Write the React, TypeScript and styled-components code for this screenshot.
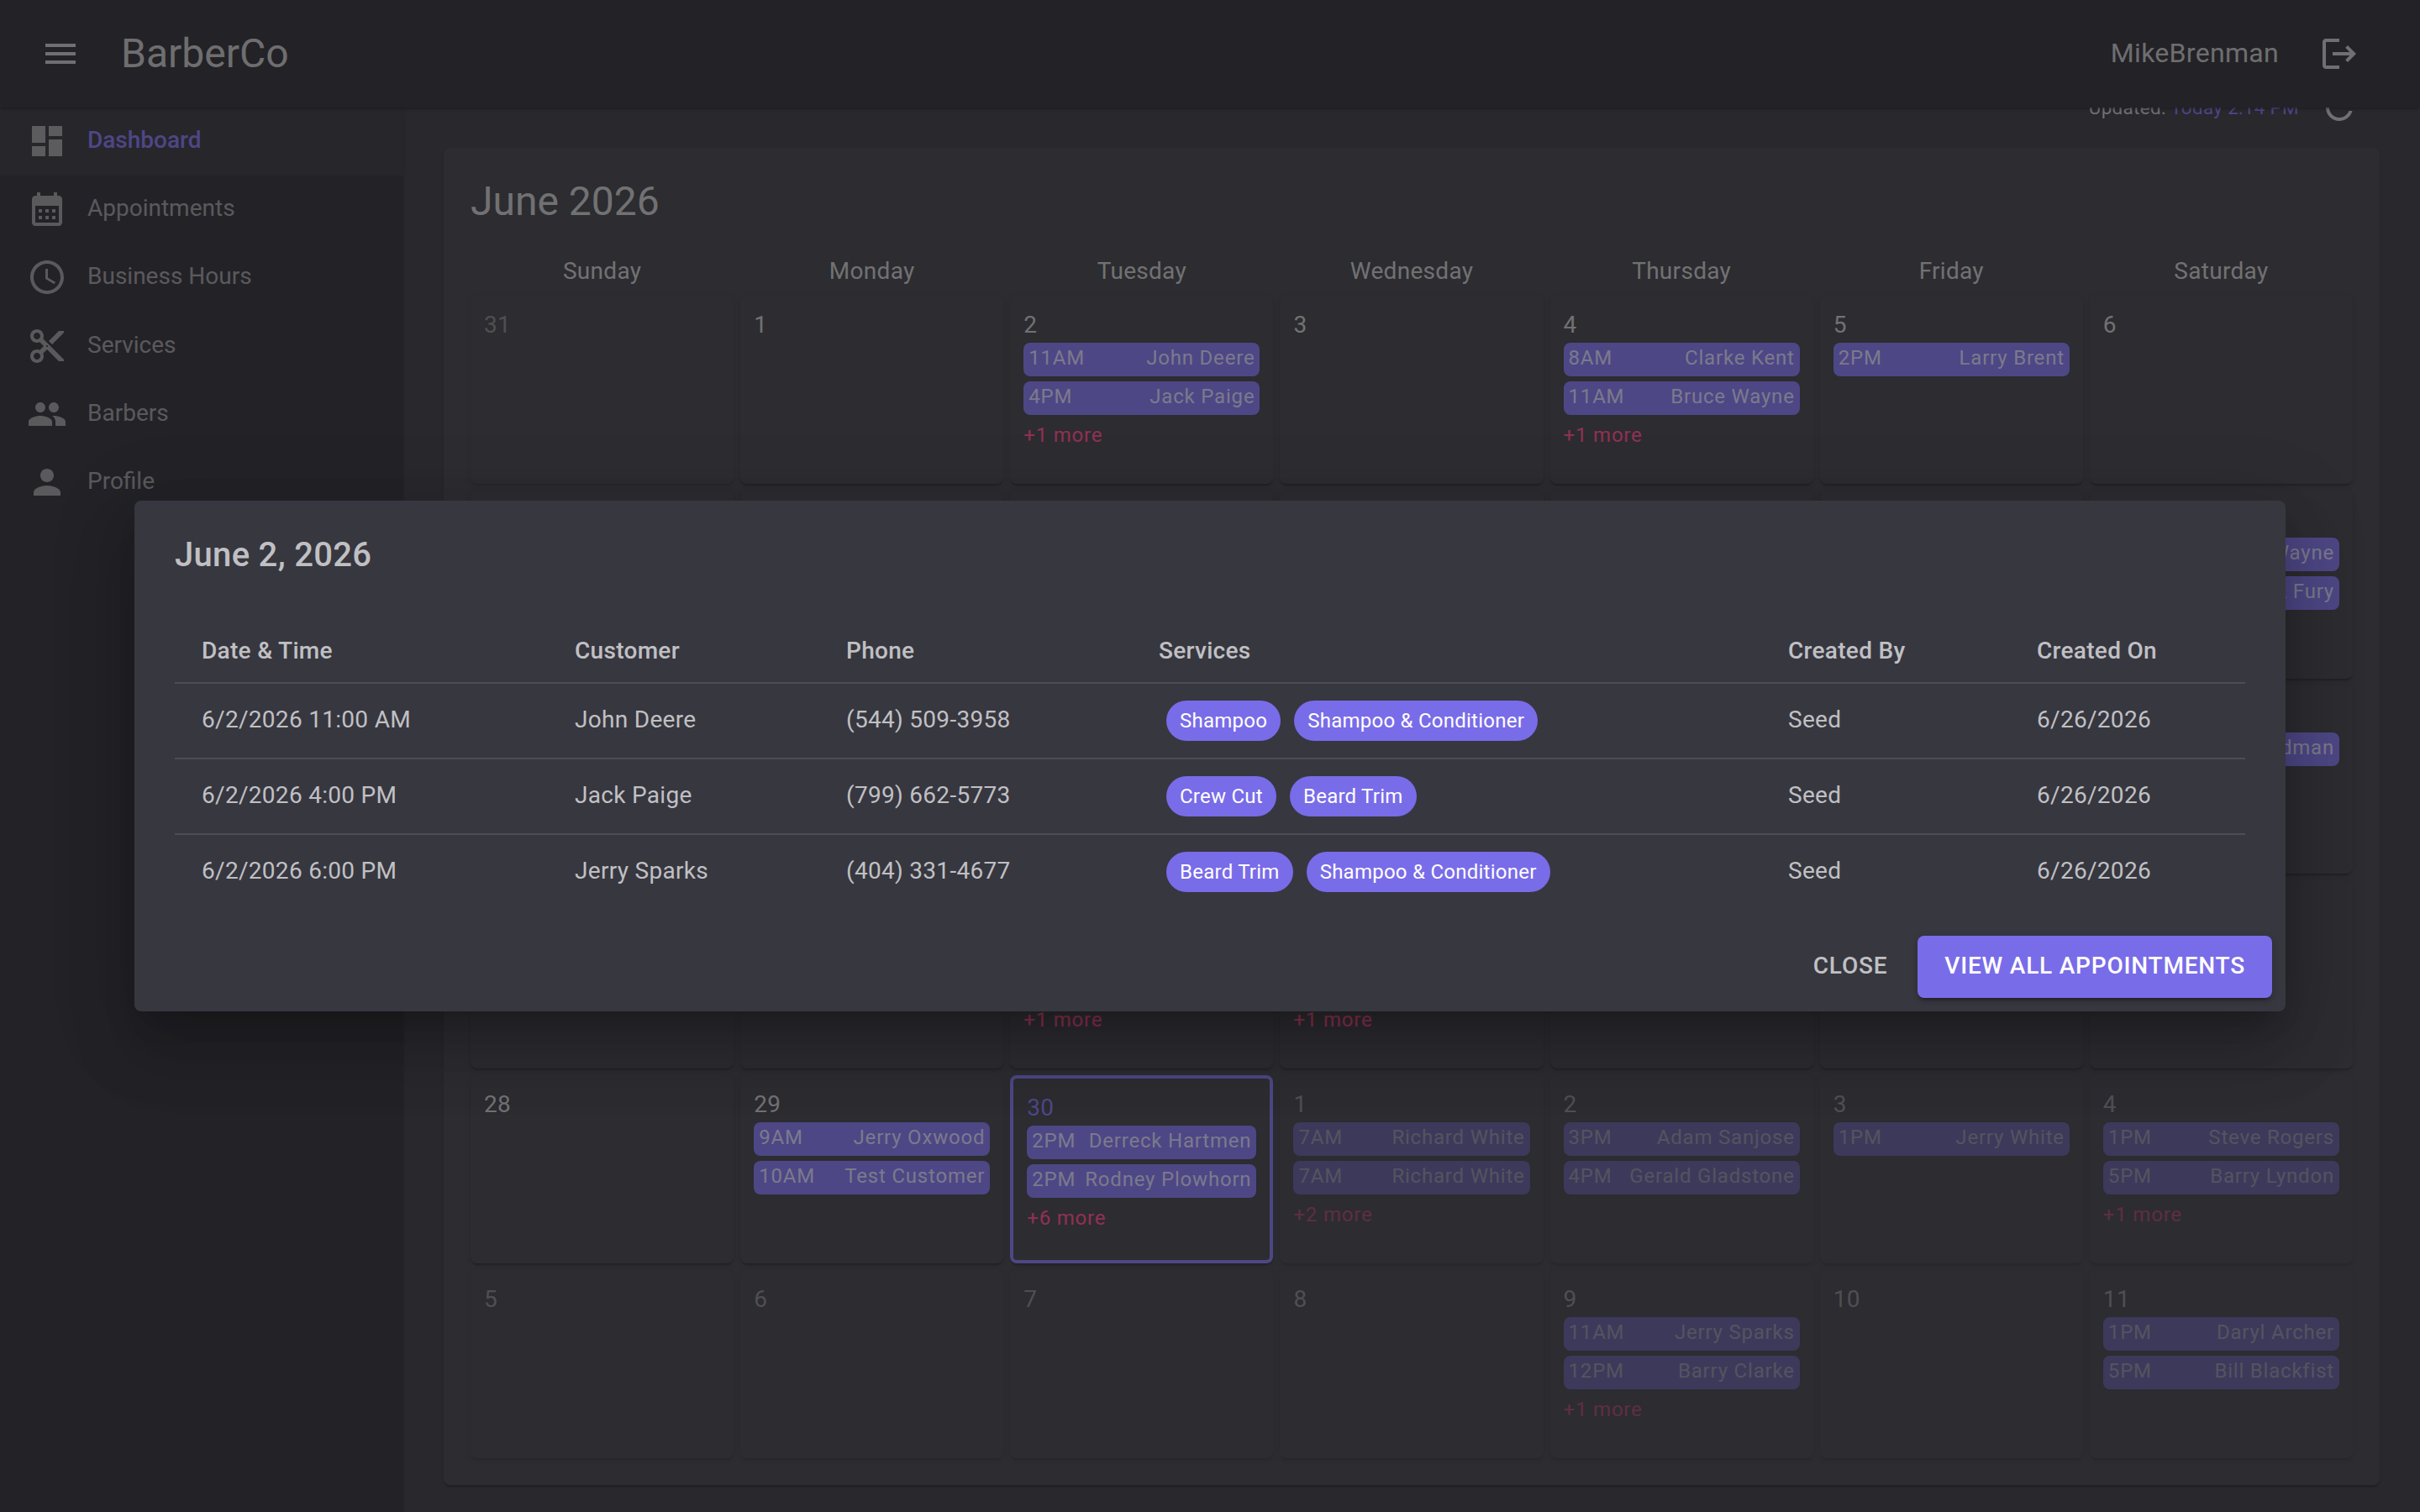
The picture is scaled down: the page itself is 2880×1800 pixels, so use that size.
import React from "react";
import styled, { createGlobalStyle, css } from "styled-components";

const color = {
  bar: "#25232d",
  page: "#2f2f39",
  paper: "#373740",
  primary: "#796ce8",
  secondary: "#ff4081",
  text: "rgba(255, 255, 255, 0.7)",
  muted: "rgba(255, 255, 255, 0.5)",
  divider: "#4d4d56",
};

const elevation =
  "0 4px 2px -2px rgba(0, 0, 0, 0.2), 0 2px 2px rgba(0, 0, 0, 0.14), 0 2px 6px rgba(0, 0, 0, 0.12)";

const GlobalStyle = createGlobalStyle`
  *, *::before, *::after { box-sizing: border-box; }
  html, body { margin: 0; height: 1800px; overflow: hidden; }
  body {
    background: ${color.page};
    color: ${color.text};
    font-family: Roboto, "Liberation Sans", sans-serif;
    font-size: 28px;
    line-height: 40px;
    letter-spacing: 0.3px;
  }
`;

const Shell = styled.div`
  position: relative;
  width: 2880px;
  height: 1800px;
  overflow: hidden;
  display: grid;
  grid-template: 128px 1fr / 480px 1fr;
`;

const AppBar = styled.header`
  grid-column: 1 / -1;
  position: relative;
  z-index: 2;
  display: flex;
  align-items: center;
  padding: 0 48px;
  background: ${color.bar};
  box-shadow: ${elevation};
`;

const IconSvg = styled.svg`
  display: block;
  width: 48px;
  height: 48px;
  fill: currentColor;
  flex: none;
`;

const Brand = styled.h1`
  margin: 0 auto 0 48px;
  font-size: 48px;
  font-weight: 400;
  line-height: 64px;
  letter-spacing: 0;
`;

const UserName = styled.span`
  margin-right: 48px;
  padding-bottom: 2px;
  font-size: 32px;
  line-height: 46px;
`;

const LogoutSlot = styled.span`
  margin-right: 24px;
`;

const Sidebar = styled.nav`
  position: relative;
  z-index: 1;
  display: flex;
  flex-direction: column;
  background: ${color.bar};
  box-shadow: ${elevation};
`;

const NavItem = styled.a<{ $active?: boolean }>`
  display: flex;
  align-items: center;
  height: 81.2px;
  padding: 0 32px 1px;
  gap: 24px;
  color: ${color.muted};
  letter-spacing: 0;
  ${(p) =>
    p.$active &&
    css`
      background: rgba(255, 255, 255, 0.04);
    `}
`;

const NavLabel = styled.span<{ $active?: boolean }>`
  padding-bottom: 3px;
  line-height: 37px;
  ${(p) =>
    p.$active &&
    css`
      color: ${color.primary};
      font-weight: 500;
    `}
`;

const Main = styled.main`
  display: flex;
  flex-direction: column;
  padding: 0 48px;
  margin-top: -48px;
`;

const StatusRow = styled.div`
  display: flex;
  align-items: center;
  justify-content: flex-end;
  height: 96px;
  padding-right: 24px;
  gap: 24px;
`;

const Updated = styled.span`
  font-size: 22.4px;
  letter-spacing: 0.35px;
  em { color: ${color.primary}; font-style: normal; }
`;

const Calendar = styled.section`
  display: flex;
  flex-direction: column;
  height: 1592px;
  padding: 32px;
  border-radius: 8px;
  background: ${color.paper};
  box-shadow: ${elevation};
`;

const MonthTitle = styled.h2`
  margin: 0 0 32px;
  font-size: 48px;
  font-weight: 400;
  line-height: 64px;
  letter-spacing: 0;
`;

const Grid = styled.div`
  display: grid;
  grid-template-columns: repeat(7, 1fr);
  grid-template-rows: 40px repeat(6, 224px);
  gap: 8px;
`;

const Weekday = styled.div`
  padding-bottom: 3px;
  line-height: 37px;
  text-align: center;
`;

const Cell = styled.div<{ $outside?: boolean; $today?: boolean }>`
  display: flex;
  flex-direction: column;
  min-width: 0;
  padding: 16px;
  border-radius: 8px;
  background: ${color.paper};
  box-shadow: ${elevation};
  ${(p) => p.$outside && "opacity: 0.5;"}
  ${(p) => p.$today && `border: 4px solid ${color.primary};`}
`;

const DayNumber = styled.span<{ $today?: boolean }>`
  padding-bottom: 3px;
  line-height: 37px;
  ${(p) => p.$today && `color: ${color.primary};`}
`;

const Event = styled.div`
  display: flex;
  justify-content: space-between;
  height: 40px;
  margin-bottom: 6px;
  padding: 0 6px 4px;
  border-radius: 8px;
  background: ${color.primary};
  font-size: 24px;
  line-height: 36px;
  letter-spacing: 0.8px;
  white-space: nowrap;
`;

const More = styled.span`
  color: ${color.secondary};
  font-size: 24px;
  line-height: 36px;
  letter-spacing: 0.8px;
`;

const Backdrop = styled.div`
  position: absolute;
  inset: 0;
  z-index: 10;
  display: flex;
  align-items: center;
  justify-content: center;
  background: rgba(33, 33, 33, 0.5);
`;

const Dialog = styled.div`
  width: 2560px;
  height: 608px;
  border-radius: 8px;
  background: ${color.paper};
  box-shadow: 0 22px 30px -14px rgba(0, 0, 0, 0.2), 0 48px 76px 6px rgba(0, 0, 0, 0.14), 0 18px 92px 16px rgba(0, 0, 0, 0.12);
`;

const DialogTitle = styled.h2`
  margin: 0;
  padding: 33px 48px 31px;
  font-size: 40px;
  font-weight: 500;
  line-height: 64px;
  letter-spacing: 0.3px;
`;

const DialogContent = styled.div`
  padding: 16px 48px;
`;

const Table = styled.table`
  width: 2464px;
  table-layout: fixed;
  border-collapse: separate;
  border-spacing: 0;
`;

const HeadCell = styled.th`
  height: 74px;
  padding: 0 0 2px 32px;
  border-bottom: 2px solid ${color.divider};
  font-weight: 500;
  text-align: left;
`;

const BodyCell = styled.td<{ $last?: boolean; $chips?: boolean }>`
  height: ${(p) => (p.$last ? 88 : 90)}px;
  padding: ${(p) => (p.$chips ? "0 0 0 41px" : "0 0 3px 32px")};
  border-bottom: ${(p) => (p.$last ? "none" : `2px solid ${color.divider}`)};
`;

const Chips = styled.div`
  display: flex;
  gap: 16px;
`;

const Chip = styled.span`
  height: 48px;
  padding: 0 16px;
  border-radius: 24px;
  background: ${color.primary};
  color: #fff;
  font-size: 24px;
  line-height: 48px;
  letter-spacing: 0.25px;
  white-space: nowrap;
`;

const DialogActions = styled.div`
  display: flex;
  justify-content: flex-end;
  gap: 20px;
  padding: 16px;
`;

const Button = styled.button<{ $contained?: boolean }>`
  height: 74px;
  padding: 0 16px 4px;
  border: 0;
  border-radius: 8px;
  background: transparent;
  color: ${color.text};
  font: 500 28px/49px Roboto, "Liberation Sans", sans-serif;
  letter-spacing: 0.8px;
  text-transform: uppercase;
  ${(p) =>
    p.$contained &&
    css`
      padding: 0 32px 4px;
      background: ${color.primary};
      color: #fff;
      box-shadow: 0 6px 2px -4px rgba(0, 0, 0, 0.2), 0 4px 4px rgba(0, 0, 0, 0.14), 0 2px 10px rgba(0, 0, 0, 0.12);
    `}
`;

const Icon = ({ d }: { d: string }) => (
  <IconSvg viewBox="0 0 24 24">
    <path d={d} />
  </IconSvg>
);

const icons = {
  menu: "M3 18h18v-2H3v2zm0-5h18v-2H3v2zm0-7v2h18V6H3z",
  logout:
    "M17 7l-1.41 1.41L18.17 11H8v2h10.17l-2.58 2.58L17 17l5-5zM4 5h8V3H4c-1.1 0-2 .9-2 2v14c0 1.1.9 2 2 2h8v-2H4V5z",
  refresh:
    "M17.65 6.35C16.2 4.9 14.21 4 12 4c-4.42 0-7.99 3.58-7.99 8s3.57 8 7.99 8c3.73 0 6.84-2.55 7.73-6h-2.08c-.82 2.33-3.04 4-5.65 4-3.31 0-6-2.69-6-6s2.69-6 6-6c1.66 0 3.14.69 4.22 1.78L13 11h7V4l-2.35 2.35z",
  dashboard: "M3 13h8V3H3v10zm0 8h8v-6H3v6zm10 0h8V11h-8v10zm0-18v6h8V3h-8z",
  calendar:
    "M19 4h-1V2h-2v2H8V2H6v2H5c-1.11 0-1.99.9-1.99 2L3 20c0 1.1.89 2 2 2h14c1.1 0 2-.9 2-2V6c0-1.1-.9-2-2-2zm0 16H5V10h14v10zM9 14H7v-2h2v2zm4 0h-2v-2h2v2zm4 0h-2v-2h2v2zm-8 4H7v-2h2v2zm4 0h-2v-2h2v2zm4 0h-2v-2h2v2z",
  clock:
    "M11.99 2C6.47 2 2 6.48 2 12s4.47 10 9.99 10C17.52 22 22 17.52 22 12S17.52 2 11.99 2zM12 20c-4.42 0-8-3.58-8-8s3.58-8 8-8 8 3.58 8 8-3.58 8-8 8zm.5-13H11v6l5.25 3.15.75-1.23-4.5-2.67z",
  cut: "M9.64 7.64c.23-.5.36-1.05.36-1.64 0-2.21-1.79-4-4-4S2 3.79 2 6s1.79 4 4 4c.59 0 1.14-.13 1.64-.36L10 12l-2.36 2.36C7.14 14.13 6.59 14 6 14c-2.21 0-4 1.79-4 4s1.79 4 4 4 4-1.79 4-4c0-.59-.13-1.14-.36-1.64L12 14l7 7h3v-1L9.64 7.64zM6 8c-1.1 0-2-.89-2-2s.9-2 2-2 2 .89 2 2-.9 2-2 2zm0 12c-1.1 0-2-.89-2-2s.9-2 2-2 2 .89 2 2-.9 2-2 2zm6-7.5c-.28 0-.5-.22-.5-.5s.22-.5.5-.5.5.22.5.5-.22.5-.5.5zM19 3l-6 6 2 2 7-7V3z",
  group:
    "M16 11c1.66 0 2.99-1.34 2.99-3S17.66 5 16 5c-1.66 0-3 1.34-3 3s1.34 3 3 3zm-8 0c1.66 0 2.99-1.34 2.99-3S9.66 5 8 5C6.34 5 5 6.34 5 8s1.34 3 3 3zm0 2c-2.33 0-7 1.17-7 3.5V19h14v-2.5c0-2.33-4.67-3.5-7-3.5zm8 0c-.29 0-.62.02-.97.05 1.16.84 1.97 1.97 1.97 3.45V19h6v-2.5c0-2.33-4.67-3.5-7-3.5z",
  person:
    "M12 12c2.21 0 4-1.79 4-4s-1.79-4-4-4-4 1.79-4 4 1.79 4 4 4zm0 2c-2.67 0-8 1.34-8 4v2h16v-2c0-2.66-5.33-4-8-4z",
};

const nav = [
  { label: "Dashboard", icon: icons.dashboard, active: true },
  { label: "Appointments", icon: icons.calendar },
  { label: "Business Hours", icon: icons.clock },
  { label: "Services", icon: icons.cut },
  { label: "Barbers", icon: icons.group },
  { label: "Profile", icon: icons.person },
];

const weekdays = ["Sunday", "Monday", "Tuesday", "Wednesday", "Thursday", "Friday", "Saturday"];

type Booking = [time: string, customer: string];
const bookings: Record<number, { list: Booking[]; more?: number }> = {
  2: { list: [["11AM", "John Deere"], ["4PM", "Jack Paige"]], more: 1 },
  4: { list: [["8AM", "Clarke Kent"], ["11AM", "Bruce Wayne"]], more: 1 },
  5: { list: [["2PM", "Larry Brent"]] },
  13: { list: [["9AM", "Bruce Wayne"], ["1PM", "Nick Fury"]] },
  20: { list: [["3PM", "Gary Oldman"]] },
  23: { list: [["9AM", "Jack Paige"], ["1PM", "John Deere"]], more: 1 },
  24: { list: [["9AM", "Jerry White"], ["3PM", "Larry Brent"]], more: 1 },
  29: { list: [["9AM", "Jerry Oxwood"], ["10AM", "Test Customer"]] },
  30: { list: [["2PM", "Derreck Hartmen"], ["2PM", "Rodney Plowhorn"]], more: 6 },
  31: { list: [["7AM", "Richard White"], ["7AM", "Richard White"]], more: 2 },
  32: { list: [["3PM", "Adam Sanjose"], ["4PM", "Gerald Gladstone"]] },
  33: { list: [["1PM", "Jerry White"]] },
  34: { list: [["1PM", "Steve Rogers"], ["5PM", "Barry Lyndon"]], more: 1 },
  39: { list: [["11AM", "Jerry Sparks"], ["12PM", "Barry Clarke"]], more: 1 },
  41: { list: [["1PM", "Daryl Archer"], ["5PM", "Bill Blackfist"]] },
};

const days = Array.from({ length: 42 }, (_, index) => ({
  index,
  label: index === 0 ? 31 : index > 30 ? index - 30 : index,
  outside: index === 0 || index > 30,
  today: index === 30,
}));

const columns: [string, number][] = [
  ["Date & Time", 444],
  ["Customer", 323],
  ["Phone", 372],
  ["Services", 749],
  ["Created By", 296],
  ["Created On", 280],
];

const appointments = [
  { when: "6/2/2026 11:00 AM", who: "John Deere", phone: "(544) 509-3958", services: ["Shampoo", "Shampoo & Conditioner"] },
  { when: "6/2/2026 4:00 PM", who: "Jack Paige", phone: "(799) 662-5773", services: ["Crew Cut", "Beard Trim"] },
  { when: "6/2/2026 6:00 PM", who: "Jerry Sparks", phone: "(404) 331-4677", services: ["Beard Trim", "Shampoo & Conditioner"] },
];

export default function App() {
  return (
    <>
      <GlobalStyle />
      <Shell>
        <AppBar>
          <Icon d={icons.menu} />
          <Brand>BarberCo</Brand>
          <UserName>MikeBrenman</UserName>
          <LogoutSlot>
            <Icon d={icons.logout} />
          </LogoutSlot>
        </AppBar>
        <Sidebar>
          {nav.map((item) => (
            <NavItem key={item.label} $active={item.active}>
              <Icon d={item.icon} />
              <NavLabel $active={item.active}>{item.label}</NavLabel>
            </NavItem>
          ))}
        </Sidebar>
        <Main>
          <StatusRow>
            <Updated>
              Updated: <em>Today 2:14 PM</em>
            </Updated>
            <Icon d={icons.refresh} />
          </StatusRow>
          <Calendar>
            <MonthTitle>June 2026</MonthTitle>
            <Grid>
              {weekdays.map((name) => (
                <Weekday key={name}>{name}</Weekday>
              ))}
              {days.map((day) => {
                const entry = bookings[day.index];
                return (
                  <Cell key={day.index} $outside={day.outside} $today={day.today}>
                    <DayNumber $today={day.today}>{day.label}</DayNumber>
                    {entry?.list.map(([time, customer], i) => (
                      <Event key={i}>
                        <span>{time}</span>
                        <span>{customer}</span>
                      </Event>
                    ))}
                    {entry?.more && <More>+{entry.more} more</More>}
                  </Cell>
                );
              })}
            </Grid>
          </Calendar>
        </Main>
        <Backdrop>
          <Dialog role="dialog">
            <DialogTitle>June 2, 2026</DialogTitle>
            <DialogContent>
              <Table>
                <colgroup>
                  {columns.map(([name, width]) => (
                    <col key={name} style={{ width }} />
                  ))}
                </colgroup>
                <thead>
                  <tr>
                    {columns.map(([name]) => (
                      <HeadCell key={name}>{name}</HeadCell>
                    ))}
                  </tr>
                </thead>
                <tbody>
                  {appointments.map((row, i) => {
                    const last = i === appointments.length - 1;
                    return (
                      <tr key={row.when}>
                        <BodyCell $last={last}>{row.when}</BodyCell>
                        <BodyCell $last={last}>{row.who}</BodyCell>
                        <BodyCell $last={last}>{row.phone}</BodyCell>
                        <BodyCell $last={last} $chips>
                          <Chips>
                            {row.services.map((service) => (
                              <Chip key={service}>{service}</Chip>
                            ))}
                          </Chips>
                        </BodyCell>
                        <BodyCell $last={last}>Seed</BodyCell>
                        <BodyCell $last={last}>6/26/2026</BodyCell>
                      </tr>
                    );
                  })}
                </tbody>
              </Table>
            </DialogContent>
            <DialogActions>
              <Button>Close</Button>
              <Button $contained>View all appointments</Button>
            </DialogActions>
          </Dialog>
        </Backdrop>
      </Shell>
    </>
  );
}
